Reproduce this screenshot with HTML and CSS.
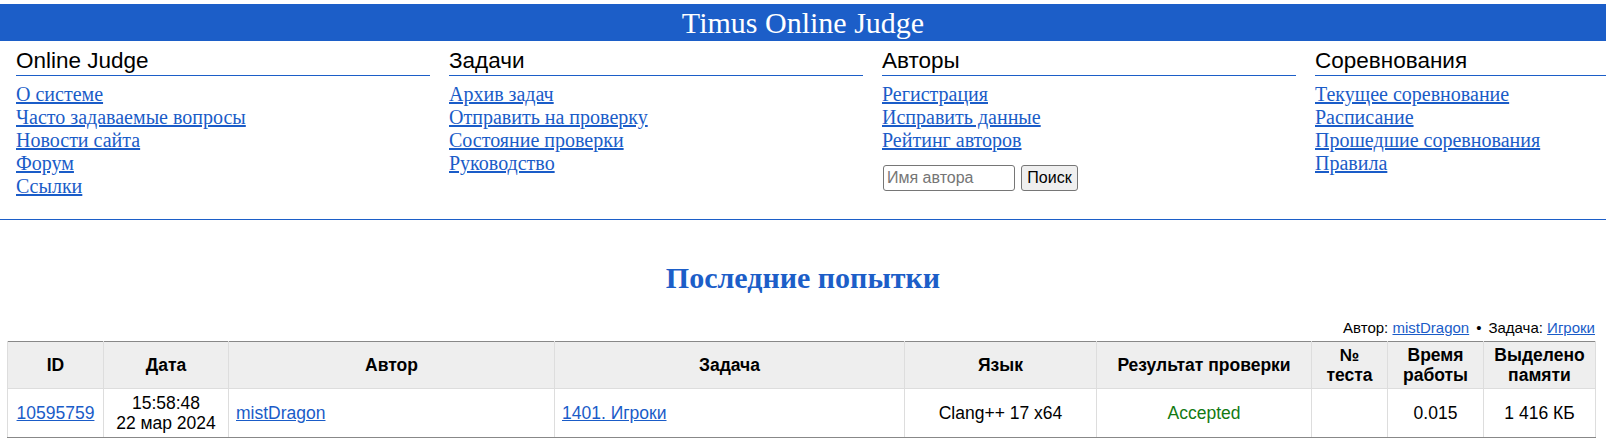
FILE: index.html
```html
<!DOCTYPE html>
<html lang="ru">
<head>
<meta charset="utf-8">
<title>Timus Online Judge</title>
<link rel="stylesheet" href="styles.css">
</head>
<body>
<header class="topbar">Timus Online Judge</header>
<nav class="menu">
  <div class="menu-col">
    <h2 class="menu-title">Online Judge</h2>
    <div class="menu-links">
      <a href="#">О системе</a>
      <a href="#">Часто задаваемые вопросы</a>
      <a href="#">Новости сайта</a>
      <a href="#">Форум</a>
      <a href="#">Ссылки</a>
    </div>
  </div>
  <div class="menu-col">
    <h2 class="menu-title">Задачи</h2>
    <div class="menu-links">
      <a href="#">Архив задач</a>
      <a href="#">Отправить на проверку</a>
      <a href="#">Состояние проверки</a>
      <a href="#">Руководство</a>
    </div>
  </div>
  <div class="menu-col">
    <h2 class="menu-title">Авторы</h2>
    <div class="menu-links">
      <a href="#">Регистрация</a>
      <a href="#">Исправить данные</a>
      <a href="#">Рейтинг авторов</a>
    </div>
    <form class="search">
      <input class="search-input" type="text" placeholder="Имя автора">
      <button class="search-btn" type="button">Поиск</button>
    </form>
  </div>
  <div class="menu-col">
    <h2 class="menu-title">Соревнования</h2>
    <div class="menu-links">
      <a href="#">Текущее соревнование</a>
      <a href="#">Расписание</a>
      <a href="#">Прошедшие соревнования</a>
      <a href="#">Правила</a>
    </div>
  </div>
</nav>
<hr class="sep">
<h1 class="page-title">Последние попытки</h1>
<div class="filter">Автор: <a href="#">mistDragon</a><span class="dot">•</span>Задача: <a href="#">Игроки</a></div>
<table class="status">
  <colgroup>
    <col class="c-id"><col class="c-date"><col class="c-author"><col class="c-problem"><col class="c-lang"><col class="c-verdict"><col class="c-test"><col class="c-time"><col class="c-mem">
  </colgroup>
  <thead>
    <tr>
      <th>ID</th>
      <th>Дата</th>
      <th>Автор</th>
      <th>Задача</th>
      <th>Язык</th>
      <th>Результат проверки</th>
      <th>№<br>теста</th>
      <th>Время<br>работы</th>
      <th>Выделено<br>памяти</th>
    </tr>
  </thead>
  <tbody>
    <tr>
      <td><a href="#">10595759</a></td>
      <td>15:58:48<br>22 мар 2024</td>
      <td class="left"><a href="#">mistDragon</a></td>
      <td class="left"><a href="#">1401. Игроки</a></td>
      <td>Clang++ 17 x64</td>
      <td class="accepted">Accepted</td>
      <td></td>
      <td>0.015</td>
      <td>1 416 КБ</td>
    </tr>
  </tbody>
</table>
</body>
</html>
```
FILE: styles.css
```css
html, body {
  margin: 0;
  padding: 0;
  background: #ffffff;
  overflow-x: hidden;
}
body {
  font-family: "Liberation Serif", "Times New Roman", serif;
  color: #000;
}
a {
  color: #1a5cc8;
}
.topbar {
  margin-top: 4px;
  height: 37px;
  line-height: 37px;
  background: #1c5ec8;
  color: #ffffff;
  text-align: center;
  font-size: 30px;
  font-family: "Liberation Serif", "Times New Roman", serif;
}
.menu {
  display: flex;
  gap: 19px;
  padding-left: 16px;
  margin-top: 7px;
  width: 1800px;
}
.menu-col {
  flex: 0 0 414px;
}
.menu-title {
  margin: 0;
  padding-bottom: 1px;
  border-bottom: 1px solid #1c5ec8;
  font-family: "Liberation Sans", Arial, sans-serif;
  font-weight: normal;
  font-size: 22.5px;
}
.menu-links {
  margin-top: 7px;
  display: flex;
  flex-direction: column;
  align-items: flex-start;
  font-size: 20px;
}
.search {
  margin: 13px 0 0 1px;
  display: flex;
  gap: 6px;
}
.search-input {
  box-sizing: border-box;
  width: 132px;
  height: 26px;
  border: 1px solid #767676;
  border-radius: 3px;
  padding: 1px 3px;
  font-family: "Liberation Sans", Arial, sans-serif;
  font-size: 16px;
}
.search-input::placeholder {
  color: #757575;
}
.search-btn {
  box-sizing: border-box;
  width: 57px;
  height: 26px;
  border: 1px solid #767676;
  border-radius: 3px;
  background: #efefef;
  padding: 0;
  font-family: "Liberation Sans", Arial, sans-serif;
  font-size: 16px;
  color: #000;
}
.sep {
  margin: 21px 0 0 0;
  border: 0;
  border-top: 1px solid #1c5ec8;
  height: 0;
}
.page-title {
  margin: 41px 0 0 0;
  text-align: center;
  color: #1c5ec8;
  font-size: 30px;
  font-weight: bold;
}
.filter {
  margin: 25px 11px 0 0;
  text-align: right;
  font-family: "Liberation Sans", Arial, sans-serif;
  font-size: 15px;
  line-height: 16px;
}
.dot {
  margin: 0 7px;
}
.status {
  margin: 5px 0 0 7px;
  width: 1588px;
  table-layout: fixed;
  border-collapse: collapse;
  font-family: "Liberation Sans", Arial, sans-serif;
  font-size: 17.5px;
  line-height: 20px;
  border-top: 1px solid #888;
  border-bottom: 1px solid #888;
}
.c-id { width: 96px; }
.c-date { width: 125px; }
.c-author { width: 326px; }
.c-problem { width: 350px; }
.c-lang { width: 192px; }
.c-verdict { width: 215px; }
.c-test { width: 76px; }
.c-time { width: 96px; }
.c-mem { width: 112px; }
.status th {
  background: #eeeeee;
  font-weight: bold;
  padding: 3px 4px;
  border-left: 1px solid #dddddd;
  border-right: 1px solid #dddddd;
  border-bottom: 1px solid #dddddd;
  text-align: center;
}
.status td {
  padding: 4px 4px;
  border: 1px solid #dddddd;
  border-top: 0;
  border-bottom: 1px solid #888;
  text-align: center;
}
.status td.left {
  text-align: left;
  padding-left: 7px;
}
.status td.accepted {
  color: #137a13;
}
```
